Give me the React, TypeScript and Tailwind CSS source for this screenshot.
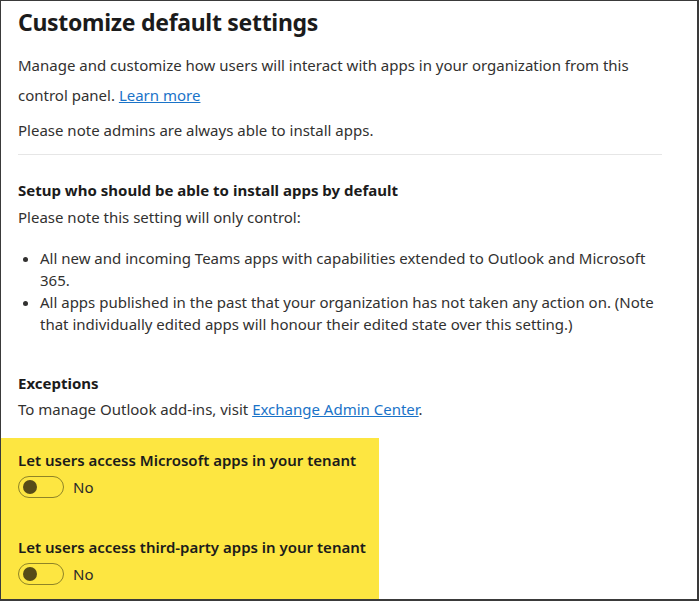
import React from 'react';

const font = { fontFamily: '"Noto Sans", "Open Sans", sans-serif' };

function Toggle({ label }: { label: string }) {
  return (
    <div className="mt-[5px] flex items-center gap-[9px]">
      <div className="flex h-[22px] w-[46px] items-center rounded-full border border-[#8f8427] px-[4px]">
        <div className="h-[14px] w-[14px] rounded-full bg-[#564b18]" />
      </div>
      <span className="text-[15px] text-[#2a2a2a]">{label}</span>
    </div>
  );
}

export default function App() {
  return (
    <div
      className="box-border h-[601px] w-[699px] overflow-hidden border-t border-l border-r-2 border-b-2 border-[#3a3a3a] bg-white text-[#323130]"
      style={font}
    >
      <div className="pl-[17px] pr-[35px]">
        <h1 className="pt-[3px] text-[23px] font-bold leading-[36px] tracking-[-0.3px] text-[#1b1b1b]">
          Customize default settings
        </h1>
        <div className="mt-[10px] text-[15px] leading-[30px]">
          <div>Manage and customize how users will interact with apps in your organization from this</div>
          <div>
            control panel.{' '}
            <a className="text-[#1a73c8] underline" href="#">
              Learn more
            </a>
          </div>
        </div>
        <p className="mt-[5px] text-[15px] leading-[30px]">Please note admins are always able to install apps.</p>
        <div className="mt-[9px] h-px bg-[#e6e6e6]" />
        <h2 className="mt-[24px] text-[15px] font-bold leading-[22px] text-[#1b1b1b]">
          Setup who should be able to install apps by default
        </h2>
        <p className="mt-[5px] text-[15px] leading-[22px]">Please note this setting will only control:</p>
        <ul className="mt-[19px] list-disc pl-[22px] text-[15px] leading-[22px]">
          <li>All new and incoming Teams apps with capabilities extended to Outlook and Microsoft 365.</li>
          <li>
            All apps published in the past that your organization has not taken any action on. (Note that individually
            edited apps will honour their edited state over this setting.)
          </li>
        </ul>
        <h2 className="mt-[37px] text-[15px] font-bold leading-[22px] text-[#1b1b1b]">Exceptions</h2>
        <p className="mt-[4px] text-[15px] leading-[22px]">
          To manage Outlook add-ins, visit{' '}
          <a className="text-[#1a73c8] underline" href="#">
            Exchange Admin Center
          </a>
          .
        </p>
      </div>
      <div className="mt-[18px] h-[200px] w-[378px] bg-[#fde641] pl-[17px] pt-[11px] text-[#1b1b1b]">
        <div className="text-[15px] font-semibold leading-[22px]">Let users access Microsoft apps in your tenant</div>
        <Toggle label="No" />
        <div className="mt-[37px] text-[15px] font-semibold leading-[22px]">
          Let users access third-party apps in your tenant
        </div>
        <Toggle label="No" />
      </div>
    </div>
  );
}
